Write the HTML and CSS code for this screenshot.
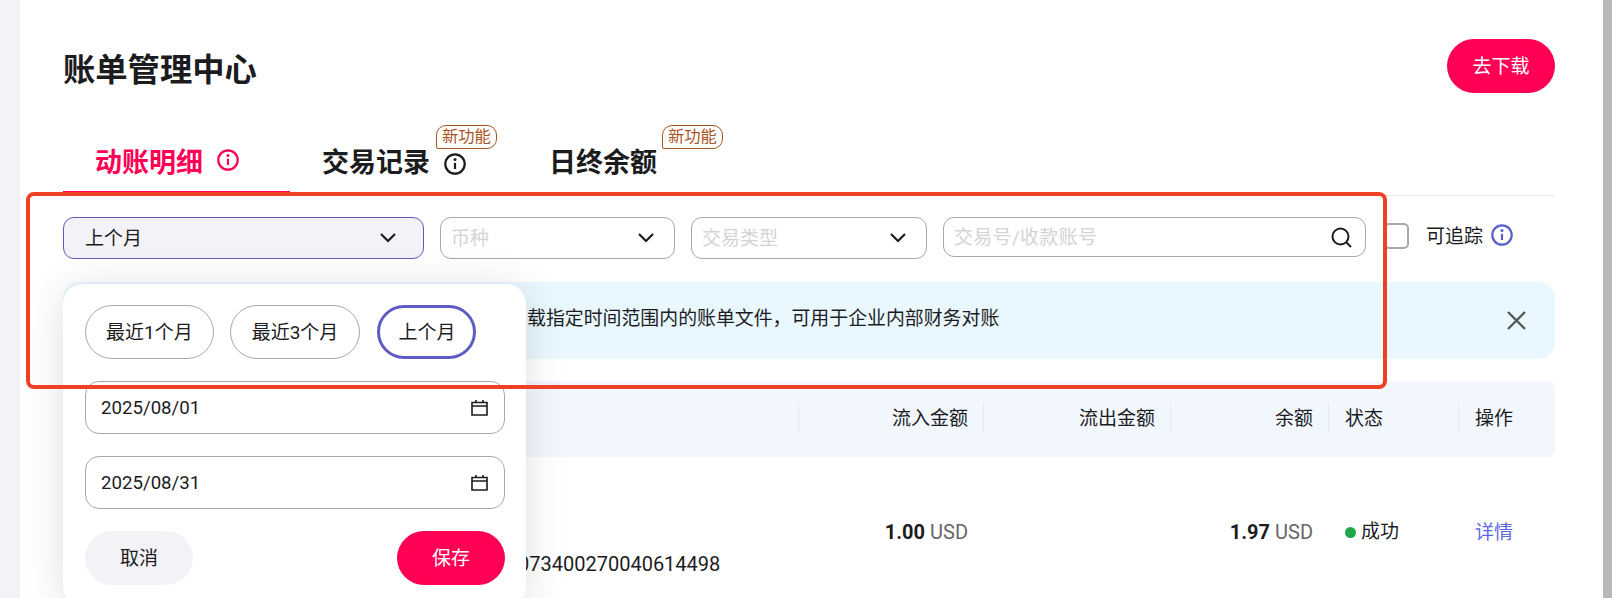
FILE: index.html
```html
<!DOCTYPE html>
<html lang="zh-CN">
<head>
<meta charset="utf-8">
<title>账单管理中心</title>
<link rel="stylesheet" href="styles.css">
</head>
<body>
<div class="app">
  <aside class="side"></aside>
  <main class="main">
    <header class="head">
      <h1 class="title">账单管理中心</h1>
      <button class="btn btn-primary btn-download"><span class="lift">去下载</span></button>
    </header>

    <nav class="tabs">
      <div class="tab tab-active">
        <span class="tab-text">动账明细</span>
        <svg class="info info-first" viewBox="0 0 22 22"><circle cx="11" cy="11" r="9.7"/><circle class="fill" cx="11" cy="6.6" r="1.5"/><path d="M11 9.8v6.2"/></svg>
      </div>
      <div class="tab">
        <span class="tab-text">交易记录</span>
        <svg class="info info-low" viewBox="0 0 22 22"><circle cx="11" cy="11" r="9.7"/><circle class="fill" cx="11" cy="6.6" r="1.5"/><path d="M11 9.8v6.2"/></svg>
        <span class="badge badge-second">新功能</span>
      </div>
      <div class="tab">
        <span class="tab-text">日终余额</span>
        <span class="badge badge-third">新功能</span>
      </div>
    </nav>

    <section class="filters">
      <div class="select select-period"><span class="lift">上个月</span><svg class="chev" viewBox="0 0 16 10"><path d="M1 1l7 7 7-7"/></svg></div>
      <div class="select select-currency"><span class="ph lift">币种</span><svg class="chev" viewBox="0 0 16 10"><path d="M1 1l7 7 7-7"/></svg></div>
      <div class="select select-type"><span class="ph lift">交易类型</span><svg class="chev" viewBox="0 0 16 10"><path d="M1 1l7 7 7-7"/></svg></div>
      <div class="search"><span class="ph lift search-text">交易号/收款账号</span><svg class="search-icon" viewBox="0 0 21 21"><circle cx="9.5" cy="9.5" r="8"/><path d="M15.5 15.5l4.5 4.5"/></svg></div>
      <span class="check"></span>
      <span class="check-label">可追踪</span>
      <svg class="info info-purple" viewBox="0 0 22 22"><circle cx="11" cy="11" r="9.7"/><circle class="fill" cx="11" cy="6.6" r="1.5"/><path d="M11 9.8v6.2"/></svg>
    </section>

    <section class="banner">
      <p class="banner-text">载指定时间范围内的账单文件&#xFF0C;可用于企业内部财务对账</p>
      <svg class="close" viewBox="0 0 19 19"><path d="M1 1l17 17M18 1L1 18"/></svg>
    </section>

    <section class="table">
      <div class="grid thead">
        <div class="cell"></div>
        <div class="cell num">流入金额</div>
        <div class="cell num">流出金额</div>
        <div class="cell num">余额</div>
        <div class="cell txt">状态</div>
        <div class="cell txt">操作</div>
      </div>
      <div class="grid trow">
        <div class="tcol-first"><div class="serial">073400270040614498</div></div>
        <div class="tnum"><b>1.00</b> <span class="cur">USD</span></div>
        <div class="tnum"></div>
        <div class="tnum tnum-balance"><b>1.97</b> <span class="cur">USD</span></div>
        <div class="ttxt ttxt-status"><i class="dot"></i>成功</div>
        <div class="ttxt"><a class="link">详情</a></div>
      </div>
    </section>

    <div class="popover">
      <div class="chips">
        <span class="chip"><span class="lift">最近1个月</span></span>
        <span class="chip chip-wide"><span class="lift">最近3个月</span></span>
        <span class="chip chip-on"><span class="lift">上个月</span></span>
      </div>
      <div class="date"><span>2025/08/01</span><svg class="cal" viewBox="0 0 17 17"><path d="M1 3.5h15v12.5H1zM1 7h15M5 1v3M12 1v3"/></svg></div>
      <div class="date"><span>2025/08/31</span><svg class="cal" viewBox="0 0 17 17"><path d="M1 3.5h15v12.5H1zM1 7h15M5 1v3M12 1v3"/></svg></div>
      <div class="actions">
        <button class="btn btn-muted"><span class="lift">取消</span></button>
        <button class="btn btn-primary"><span class="lift">保存</span></button>
      </div>
    </div>

    <div class="annotation"></div>
  </main>
  <div class="scroll"><div class="scroll-thumb"></div></div>
</div>
</body>
</html>
```
FILE: styles.css
```css
* { box-sizing: border-box; }
html, body { margin: 0; height: 598px; overflow: hidden; background: #fff; }
body { font-family: Roboto, "Noto Sans CJK SC", sans-serif; font-size: 19px; color: #1c1c1e; }

.app { display: flex; height: 598px; }
.side { width: 20px; background: #f2f2f7; flex: none; }
.main { flex: 1; padding: 39px 48px 0 43px; min-width: 0; }
.scroll { width: 11px; flex: none; padding-right: 2px; }
.scroll-thumb { height: 100%; background: #b9b9b9; }
.lift { display: block; padding-bottom: 4px; }

.head { display: flex; justify-content: space-between; align-items: center; height: 54px; }
.title { margin: 0; font-size: 32.3px; line-height: 44px; font-weight: 700; padding-top: 8px; }

.btn { border: 0; height: 54px; width: 108px; border-radius: 27px; font: inherit; padding: 0; }
.btn-primary { background: #ff0055; color: #fff; }
.btn-muted { background: #f2f2f7; color: #1c1c1e; }

.tabs { display: flex; height: 103px; border-bottom: 1px solid #e5e5ea; align-items: flex-end; }
.tab { position: relative; display: flex; align-items: center; gap: 14px; height: 64px; padding: 0 51px 8px 32px; font-size: 27px; font-weight: 700; line-height: 40px; }
.tab-text { padding-top: 8px; }
.tab-active { color: #ff0055; border-bottom: 4px solid #ff0055; padding-bottom: 4px; }
.info { width: 22px; height: 22px; flex: none; fill: none; stroke: currentColor; stroke-width: 2.2; }
.info .fill { fill: currentColor; stroke: none; }
.info-first { margin-top: 2px; }
.info-low { margin-top: 10px; }
.info-purple { color: #5a5fc8; margin: 7px 0 0 8px; }
.badge { position: absolute; top: -6px; width: 61px; height: 24px; padding-left: 5px; line-height: 21px; font-size: 16.3px; font-weight: 400; color: #a9541f; background: #fff; border: 1px solid #a9541f; border-radius: 10px 10px 10px 2px; }
.badge-second { left: 146px; }
.badge-third { left: 145px; }

.filters { display: flex; align-items: flex-start; margin-top: 21px; }
.select { display: flex; align-items: center; justify-content: space-between; height: 42px; border: 1px solid #a8a8a8; border-radius: 11px; padding: 0 20px 0 10px; margin-right: 16px; }
.select-period { width: 361px; background: #f2f2f7; border-color: #5e5ac0; padding: 0 27px 0 21px; }
.select-currency { width: 235px; }
.select-type { width: 236px; }
.ph { color: #d4d4d4; }
.search-text { letter-spacing: .3px; }
.chev { width: 16px; height: 10px; fill: none; stroke: #1c1c1e; stroke-width: 2.2; }
.search { display: flex; align-items: center; justify-content: space-between; width: 423px; height: 40px; border: 1px solid #a8a8a8; border-radius: 11px; padding: 0 13px 0 10px; }
.search-icon { width: 21px; height: 21px; fill: none; stroke: #1c1c1e; stroke-width: 2; }
.check { width: 25px; height: 26px; margin: 6px 0 0 18px; border: 2px solid #a8a8a8; border-radius: 5px; }
.check-label { margin: 6px 0 0 17px; line-height: 28px; }

.banner { display: flex; align-items: center; justify-content: space-between; height: 77px; margin-top: 23px; background: #e9f7ff; border-radius: 16px; padding: 0 29px 0 464px; }
.banner-text { margin: 0 0 4px; line-height: 28px; font-size: 18.9px; }
.close { width: 19px; height: 19px; fill: none; stroke: #555; stroke-width: 2.4; }

.table { margin-top: 22px; }
.grid { display: grid; grid-template-columns: 736px 185px 187px 157px 130px 97px; }
.thead { height: 76px; background: #f2f7fe; border-radius: 7px; padding-top: 22px; }
.cell { height: 30px; line-height: 32px; border-right: 1px solid #e3e8f0; }
.cell:nth-child(4) { border-right: 0; }
.cell:nth-child(5), .cell:nth-child(6) { border-right: 0; border-left: 1px solid #e3e8f0; }
.num { text-align: right; padding-right: 15px; }
.txt { padding-left: 16px; }
.trow { padding-top: 59px; line-height: 32px; }
.tcol-first { padding: 32px 0 0 455px; }
.serial { font-size: 20px; }
.tnum { text-align: right; padding-right: 16px; font-size: 20px; }
.tnum-balance { padding-right: 15px; }
.ttxt { padding-left: 16px; }
.ttxt-status { padding-left: 17px; }
.cur { color: #666; }
.dot { display: inline-block; width: 11px; height: 11px; border-radius: 50%; background: #1fa64b; margin-right: 5px; }
.link { color: #5b68e6; display: block; padding: 1px 0 0 1px; }

.popover { position: absolute; left: 63px; top: 284px; width: 463px; height: 322px; padding: 21px 21px 21px 22px; background: #fff; border-radius: 20px; box-shadow: 0 4px 40px rgba(0, 0, 0, .13); display: flex; flex-direction: column; gap: 22px; }
.chips { display: flex; gap: 16px; }
.chip { display: flex; align-items: center; justify-content: center; height: 54px; padding: 0 20px; border: 1px solid #a8a8a8; border-radius: 27px; }
.chip-wide { padding: 0 21px; margin-right: 1px; }
.chip-on { border: 3px solid #5e5cc4; padding: 0 18px; }
.date { display: flex; align-items: center; justify-content: space-between; height: 53px; border: 1px solid #a8a8a8; border-radius: 14px; padding: 0 16px 0 15px; font-size: 18.67px; }
.cal { width: 17px; height: 17px; fill: none; stroke: #1c1c1e; stroke-width: 1.6; }
.actions { display: flex; justify-content: space-between; }

.annotation { position: absolute; left: 26px; top: 192px; width: 1361px; height: 197px; border: 4.5px solid #ee4023; border-radius: 8px; pointer-events: none; }
```
